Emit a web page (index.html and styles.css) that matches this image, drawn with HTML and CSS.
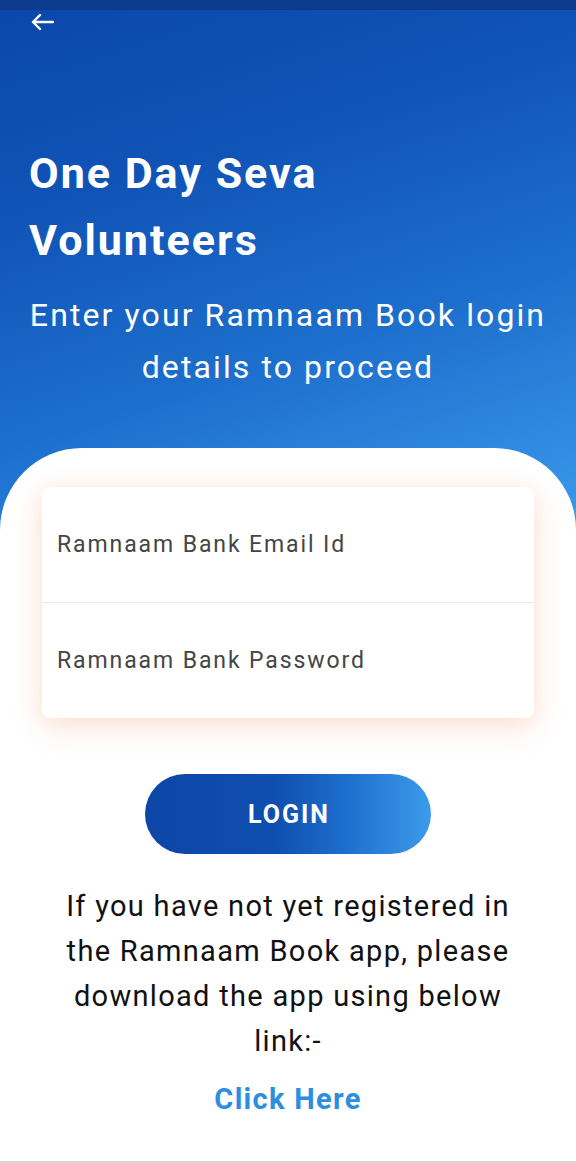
FILE: index.html
```html
<!DOCTYPE html>
<html>
<head>
<meta charset="utf-8">
<link rel="stylesheet" href="styles.css">
</head>
<body>
<div class="screen">
  <div class="status"></div>
  <div class="hero">
    <div class="topbar">
      <svg class="back" width="24" height="18" viewBox="0 0 24 18">
        <path d="M23 9H3M10 2L3 9l7 7" fill="none" stroke="#fff" stroke-width="2.4" stroke-linecap="round" stroke-linejoin="round"/>
      </svg>
    </div>
    <h1 class="title">One Day Seva<br>Volunteers</h1>
    <p class="subtitle">Enter your Ramnaam Book login details to proceed</p>
  </div>
  <div class="panel">
    <div class="card">
      <div class="field">Ramnaam Bank Email Id</div>
      <div class="field">Ramnaam Bank Password</div>
    </div>
    <button class="login">LOGIN</button>
    <p class="note">If you have not yet registered in the Ramnaam Book app, please download the app using below link:-</p>
    <a class="click">Click Here</a>
  </div>
</div>
</body>
</html>
```

FILE: styles.css
```css
html, body {
  margin: 0;
  padding: 0;
}
body {
  width: 576px;
  height: 1163px;
  overflow: hidden;
  font-family: Roboto, "Liberation Sans", sans-serif;
}
.screen {
  height: 1163px;
  display: flex;
  flex-direction: column;
  background-color: #fff;
  background-image: linear-gradient(162deg, #0b47aa 0%, #1053b6 30%, #1d6fcd 62%, #3c9cec 100%);
  background-size: 100% 540px;
  background-repeat: no-repeat;
  box-sizing: border-box;
  border-bottom: 2px solid #d6d6d6;
}
.status {
  height: 10px;
  background: #0c3b8e;
  flex: none;
}
.hero {
  flex: none;
  height: 438px;
  padding: 0 29px;
  box-sizing: border-box;
}
.topbar {
  height: 130px;
}
.back {
  display: block;
  margin-left: 1px;
  padding-top: 3px;
}
.title {
  margin: 0;
  color: #fff;
  font-size: 43px;
  font-weight: 700;
  line-height: 67px;
  letter-spacing: 2px;
}
.subtitle {
  margin: 15px -29px 0;
  color: #fff;
  font-size: 32px;
  font-weight: 400;
  line-height: 52px;
  text-align: center;
  letter-spacing: 2.1px;
}
.panel {
  flex: 1;
  background: #fff;
  border-radius: 82px 82px 0 0;
  padding-top: 39px;
  display: flex;
  flex-direction: column;
  align-items: center;
}
.card {
  width: 492px;
  background: #fff;
  border-radius: 8px;
  box-shadow: 0 10px 30px rgba(245, 140, 90, 0.22), 0 0 18px rgba(245, 150, 100, 0.12);
}
.field {
  height: 115px;
  display: flex;
  align-items: center;
  padding-left: 15px;
  font-size: 23px;
  letter-spacing: 1.9px;
  color: #454545;
}
.field + .field {
  border-top: 1px solid #ececec;
}
.login {
  margin-top: 56px;
  width: 286px;
  height: 80px;
  border: none;
  border-radius: 40px;
  background: linear-gradient(90deg, #0d46a6 0%, #0f4eae 45%, #1e6ecd 70%, #3c9bea 100%);
  color: #fff;
  font-family: Roboto, "Liberation Sans", sans-serif;
  font-size: 25px;
  font-weight: 700;
  letter-spacing: 2px;
  padding: 0 0 0 2px;
}
.note {
  margin: 30px 0 0;
  width: 476px;
  text-align: center;
  font-size: 29px;
  line-height: 45px;
  letter-spacing: 1.3px;
  color: #111;
}
.click {
  margin-top: 15px;
  font-size: 29px;
  font-weight: 700;
  line-height: 40px;
  letter-spacing: 1.3px;
  color: #2d8ee0;
}
```
